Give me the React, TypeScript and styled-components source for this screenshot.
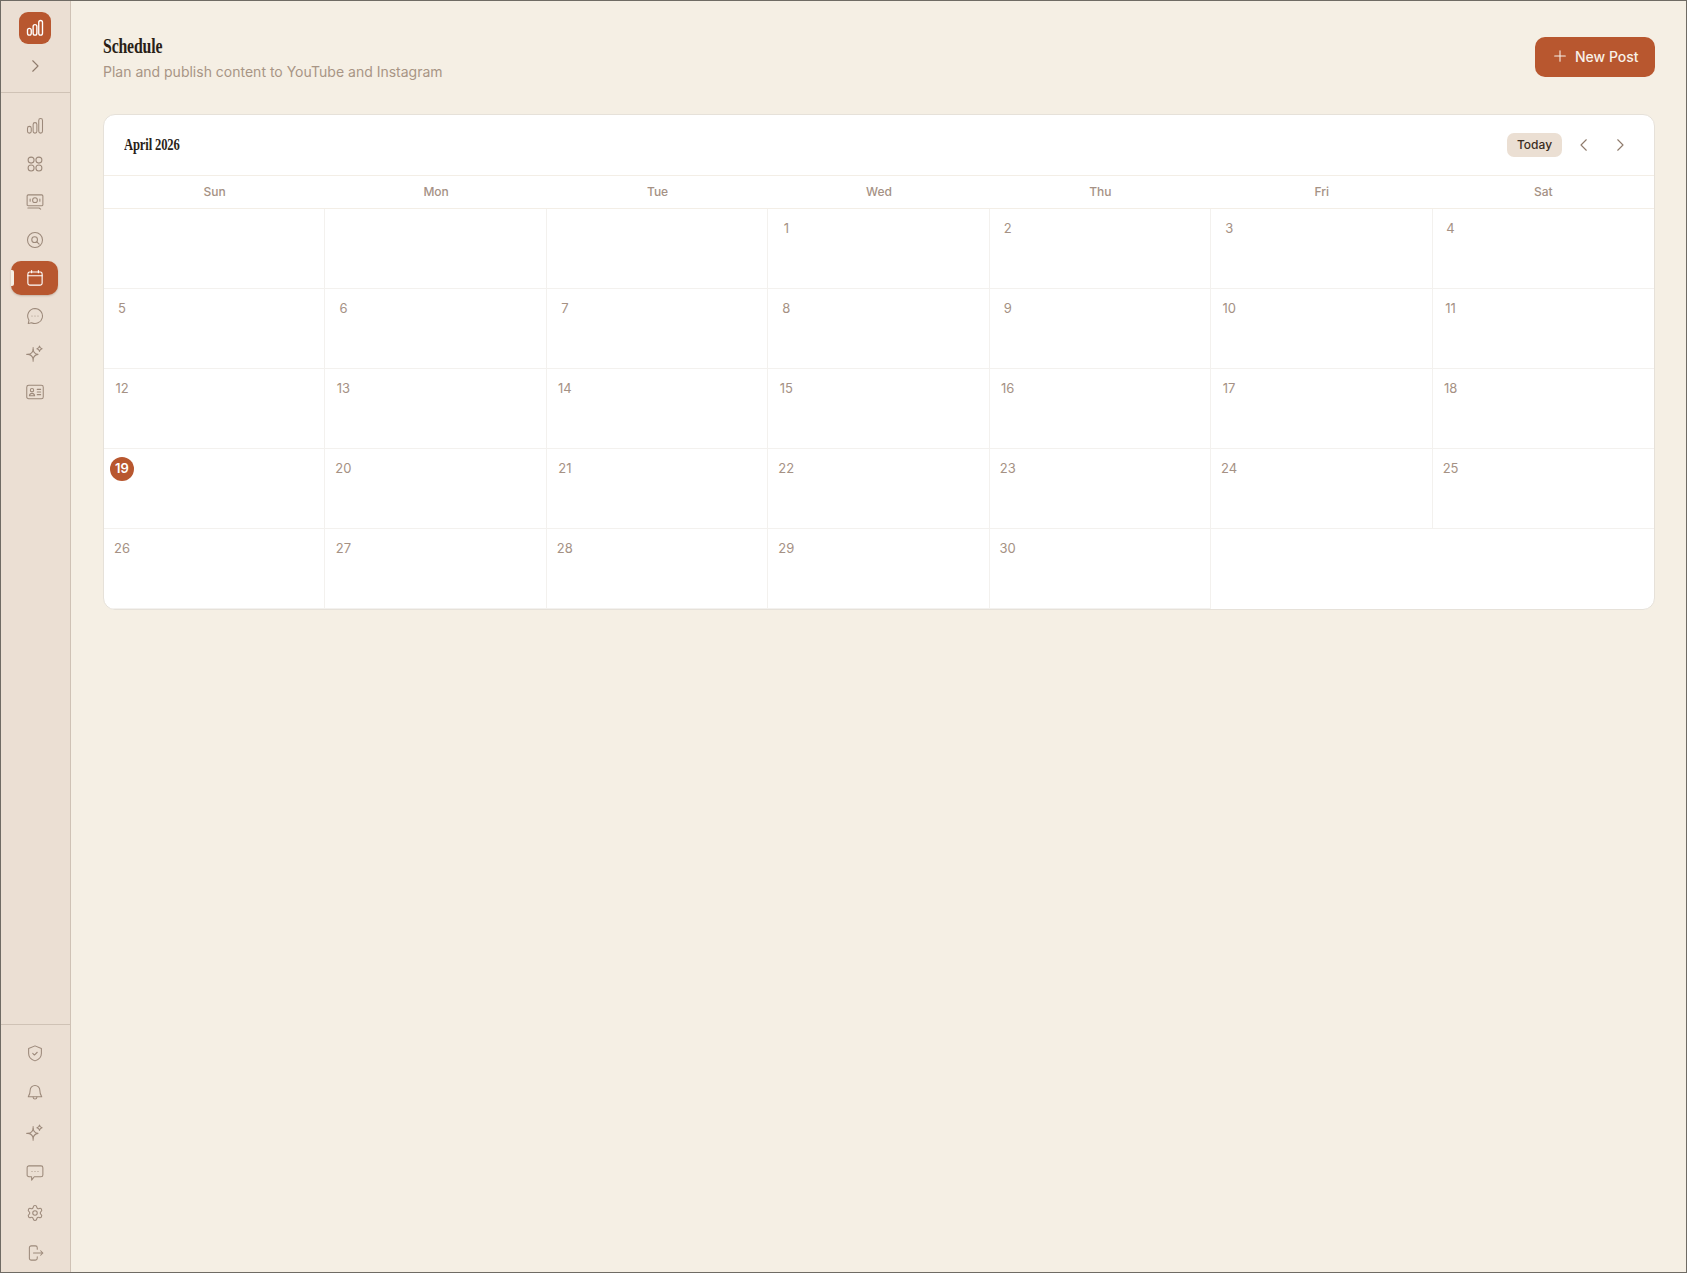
import React, { FC } from 'react';
import styled, { createGlobalStyle } from 'styled-components';
import { Settings } from 'lucide-react';

const GlobalStyle = createGlobalStyle`
  html, body { margin: 0; padding: 0; background: #f5efe4; }
  * { box-sizing: border-box; }
  body { font-family: Inter, "Liberation Sans", sans-serif; }
`;

const Frame = styled.div`
  display: flex;
  width: 1687px;
  height: 1273px;
  border: 1px solid #6f6b64;
  background: #f5efe4;
  overflow: hidden;
`;

const Sidebar = styled.aside`
  width: 70px;
  flex-shrink: 0;
  display: flex;
  flex-direction: column;
  background: #ebdfd3;
  border-right: 1px solid #cfc2b5;
`;

const SidebarTop = styled.div`
  height: 92px;
  display: flex;
  flex-direction: column;
  align-items: center;
  padding: 11px 2px 0 0;
  border-bottom: 1px solid #cfc2b5;
  flex-shrink: 0;
`;

const Logo = styled.div`
  width: 32px;
  height: 32px;
  border-radius: 9px;
  background: #b8572f;
  color: #fff;
  display: flex;
  align-items: center;
  justify-content: center;
`;

const Collapse = styled.div`
  margin-top: 13px;
  color: #8f7b6c;
  display: flex;
`;

const NavMain = styled.nav`
  flex: 1;
  display: flex;
  flex-direction: column;
  align-items: center;
  padding: 14px 2px 0 0;
`;

const NavFoot = styled.nav`
  display: flex;
  flex-direction: column;
  align-items: center;
  padding: 8px 2px 0 0;
  margin-bottom: -1px;
  border-top: 1px solid #cfc2b5;
`;

const NavItem = styled.div<{ $active?: boolean; $tall?: boolean }>`
  position: relative;
  width: 47px;
  height: ${p => (p.$tall ? '40px' : '38px')};
  display: flex;
  align-items: center;
  justify-content: center;
  color: #9c897a;
  ${p =>
    p.$active &&
    `
    height: 34px;
    margin: 2px 0;
    background: #b8572f;
    color: #fff;
    border-radius: 10px;
    box-shadow: 0 1px 2px rgba(90, 50, 30, 0.25);
    &::before {
      content: '';
      position: absolute;
      left: 0;
      top: 9px;
      width: 3px;
      height: 16px;
      background: #f5efe4;
      border-radius: 0 2px 2px 0;
    }
  `}
`;

const Main = styled.main`
  flex: 1;
  padding: 33px 31px 0 32px;
`;

const Header = styled.header`
  display: flex;
  justify-content: space-between;
  align-items: flex-start;
  height: 80px;
  padding-top: 2px;
`;

const TitleBlock = styled.div`
  display: flex;
  flex-direction: column;
`;

const Title = styled.h1`
  margin: 0;
  font-family: "Liberation Serif", serif;
  font-size: 20px;
  line-height: 20px;
  font-weight: 700;
  letter-spacing: -0.2px;
  color: #2a1f18;
  transform: scaleX(0.79);
  transform-origin: left center;
`;

const Subtitle = styled.p`
  margin: 6px 0 0;
  font-size: 14px;
  line-height: 20px;
  color: #a89585;
`;

const NewPost = styled.button`
  display: flex;
  align-items: center;
  gap: 7px;
  width: 120px;
  height: 40px;
  margin-top: 1px;
  padding: 0 0 2px 17px;
  border: none;
  border-radius: 10px;
  background: #b8572f;
  color: #f8f1e8;
  font-family: inherit;
  font-size: 14px;
  font-weight: 500;
`;

const Card = styled.section`
  background: #fff;
  border: 1px solid #e6e1d9;
  border-radius: 12px;
  overflow: hidden;
`;

const CardHeader = styled.div`
  display: flex;
  align-items: center;
  justify-content: space-between;
  height: 61px;
  padding: 0 16px 0 20px;
  border-bottom: 1px solid #f3eee6;
`;

const Month = styled.h2`
  margin: 0;
  font-family: "Liberation Serif", serif;
  font-size: 16px;
  font-weight: 700;
  letter-spacing: -0.2px;
  color: #2a1f18;
  transform: scaleX(0.79);
  transform-origin: left center;
`;

const Controls = styled.div`
  display: flex;
  align-items: center;
`;

const TodayButton = styled.button`
  width: 55px;
  height: 24px;
  margin-right: 4px;
  border: none;
  border-radius: 7px;
  background: #ebdfd3;
  color: #3a2c22;
  font-family: inherit;
  font-size: 12px;
  font-weight: 500;
  padding: 0 0 2px;
`;

const Arrow = styled.div`
  width: 36px;
  display: flex;
  justify-content: center;
  color: #8f7b6c;
`;

const Grid = styled.div`
  display: grid;
  grid-template-columns: repeat(7, 1fr);
`;

const WeekDay = styled.div`
  height: 33px;
  padding-bottom: 2px;
  display: flex;
  align-items: center;
  justify-content: center;
  font-size: 12px;
  font-weight: 500;
  color: #a59184;
  border-bottom: 1px solid #f3eee6;
`;

const Cell = styled.div<{ $last?: boolean }>`
  height: 80px;
  padding: 8px 6px;
  border-bottom: 1px solid #f3f1ee;
  border-right: ${p => (p.$last ? 'none' : '1px solid #f3f1ee')};
`;

const Filler = styled.div`
  grid-column: span 2;
  height: 80px;
`;

const DayNumber = styled.div<{ $today?: boolean }>`
  width: 24px;
  height: 24px;
  padding-bottom: 2px;
  border-radius: 50%;
  display: flex;
  align-items: center;
  justify-content: center;
  font-size: 13px;
  font-weight: ${p => (p.$today ? 600 : 400)};
  color: ${p => (p.$today ? '#fff' : '#a59184')};
  background: ${p => (p.$today ? '#b8572f' : 'transparent')};
`;

const Svg: FC<{ size?: number; width?: number; children: React.ReactNode }> = ({ size = 18, width = 1.4, children }) => (
  <svg width={size} height={size} viewBox="0 0 24 24" fill="none" stroke="currentColor" strokeWidth={width} strokeLinecap="round" strokeLinejoin="round">
    {children}
  </svg>
);

const Bars: FC<{ size?: number; width?: number }> = ({ size, width }) => (
  <Svg size={size} width={width}>
    <rect x="2" y="12.500" width="5" height="9" rx="2.500" />
    <rect x="9.500" y="7.500" width="5" height="14" rx="2.500" />
    <rect x="17" y="2" width="5" height="19.500" rx="2.500" />
  </Svg>
);

const Sparkle: FC = () => (
  <Svg>
    <path d="M9.500 6c.6 4.200 2.300 6 6.500 6.500-4.200.6-5.900 2.300-6.500 6.500-.6-4.200-2.300-5.900-6.500-6.500 4.200-.5 5.900-2.300 6.500-6.500Z" />
    <path d="M18 1.500c.4 2.200 1.300 3.100 3.500 3.500-2.200.4-3.100 1.300-3.500 3.500-.4-2.200-1.300-3.100-3.500-3.500 2.200-.4 3.100-1.300 3.500-3.500Z" />
    <path d="M9.500 19v2.500M9.500 3.500V6M1 12.500h2" />
  </Svg>
);

const mainIcons: React.ReactNode[] = [
  <Bars key="bars" />,
  <Svg key="apps">
    <circle cx="6.800" cy="6.800" r="4" />
    <circle cx="17.200" cy="6.800" r="4" />
    <circle cx="6.800" cy="17.200" r="4" />
    <circle cx="17.200" cy="17.200" r="4" />
  </Svg>,
  <Svg key="screen">
    <rect x="1.500" y="2.500" width="21" height="14.500" rx="1.500" />
    <circle cx="12" cy="9.500" r="3.200" />
    <path d="M5.500 8v3M18.500 8v3M2.500 20h15l2 1.500" />
  </Svg>,
  <Svg key="search">
    <circle cx="12" cy="12" r="10" />
    <circle cx="11.500" cy="11.500" r="3.800" />
    <path d="m14.500 14.500 3 3" />
  </Svg>,
  <Svg key="calendar" width={1.5}>
    <rect x="2.500" y="4" width="19" height="17.500" rx="2.500" />
    <path d="M2.500 9h19M7.500 2V5M16.500 2V5" />
  </Svg>,
  <Svg key="bubble">
    <path d="M12 2a10 10 0 1 1-4.600 18.900L3 22l1-4.400A10 10 0 0 1 12 2Z" />
    <path d="M8 12h.01M12 12h.01M16 12h.01" />
  </Svg>,
  <Sparkle key="sparkle" />,
  <Svg key="id">
    <rect x="1" y="3" width="22" height="18" rx="2.500" />
    <circle cx="8" cy="9.500" r="2.200" />
    <path d="M4.500 17c.4-2.200 1.800-3.200 3.500-3.200s3.100 1 3.500 3.200ZM15 8.500h4.500M15 12h4.500M15 15.500h4.500" />
  </Svg>,
];

const footIcons: React.ReactNode[] = [
  <Svg key="shield">
    <path d="M12 2.500 20.500 6v6.500c0 5-3.500 8.200-8.500 10-5-1.800-8.500-5-8.500-10V6L12 2.500Z" />
    <path d="m9 12.500 2.200 2.200L15 11" />
  </Svg>,
  <Svg key="bell">
    <path d="M12 2a6.500 6.500 0 0 0-6.500 6.500c0 5.500-2.500 8-2.500 8.500h18c0-.5-2.500-3-2.500-8.500A6.500 6.500 0 0 0 12 2Z" />
    <path d="M9.500 17.500a2.500 2.500 0 0 0 5 0" />
  </Svg>,
  <Sparkle key="sparkle" />,
  <Svg key="comment">
    <path d="M4 2.500h16A2.500 2.500 0 0 1 22.500 5v9.500A2.500 2.500 0 0 1 20 17h-9l-3.500 4.500V17H4a2.500 2.500 0 0 1-2.500-2.500V5A2.500 2.500 0 0 1 4 2.500Z" />
    <path d="M8 10h.01M12 10h.01M16 10h.01" />
  </Svg>,
  <Settings key="gear" size={18} strokeWidth={1.4} />,
  <Svg key="logout">
    <path d="M15 7V5a2.500 2.500 0 0 0-2.500-2.500H7A2.500 2.500 0 0 0 4.500 5v14A2.500 2.500 0 0 0 7 21.500h5.500A2.500 2.500 0 0 0 15 19v-2" />
    <path d="M10 12h12.500M19.500 9l3 3-3 3" />
  </Svg>,
];

const weekDays = ['Sun', 'Mon', 'Tue', 'Wed', 'Thu', 'Fri', 'Sat'];
const leading = 3;
const daysInMonth = 30;
const today = 19;

const cells: (number | null)[] = [
  ...Array(leading).fill(null),
  ...Array.from({ length: daysInMonth }, (_, i) => i + 1),
];

export default function App() {
  return (
    <>
      <GlobalStyle />
      <Frame>
        <Sidebar>
          <SidebarTop>
            <Logo>
              <Bars size={18} width={1.8} />
            </Logo>
            <Collapse>
              <Svg size={18} width={1.5}>
                <path d="m9 5 7 7-7 7" />
              </Svg>
            </Collapse>
          </SidebarTop>
          <NavMain>
            {mainIcons.map((icon, i) => (
              <NavItem key={i} $active={i === 4}>
                {icon}
              </NavItem>
            ))}
          </NavMain>
          <NavFoot>
            {footIcons.map((icon, i) => (
              <NavItem key={i} $tall>
                {icon}
              </NavItem>
            ))}
          </NavFoot>
        </Sidebar>
        <Main>
          <Header>
            <TitleBlock>
              <Title>Schedule</Title>
              <Subtitle>Plan and publish content to YouTube and Instagram</Subtitle>
            </TitleBlock>
            <NewPost>
              <Svg size={16} width={1.6}>
                <path d="M12 4v16M4 12h16" />
              </Svg>
              New Post
            </NewPost>
          </Header>
          <Card>
            <CardHeader>
              <Month>April 2026</Month>
              <Controls>
                <TodayButton>Today</TodayButton>
                <Arrow>
                  <Svg size={18} width={1.5}>
                    <path d="m15 5-7 7 7 7" />
                  </Svg>
                </Arrow>
                <Arrow>
                  <Svg size={18} width={1.5}>
                    <path d="m9 5 7 7-7 7" />
                  </Svg>
                </Arrow>
              </Controls>
            </CardHeader>
            <Grid>
              {weekDays.map(d => (
                <WeekDay key={d}>{d}</WeekDay>
              ))}
              {cells.map((day, i) => (
                <Cell key={i} $last={i % 7 === 6}>
                  {day !== null && <DayNumber $today={day === today}>{day}</DayNumber>}
                </Cell>
              ))}
              <Filler />
            </Grid>
          </Card>
        </Main>
      </Frame>
    </>
  );
}
